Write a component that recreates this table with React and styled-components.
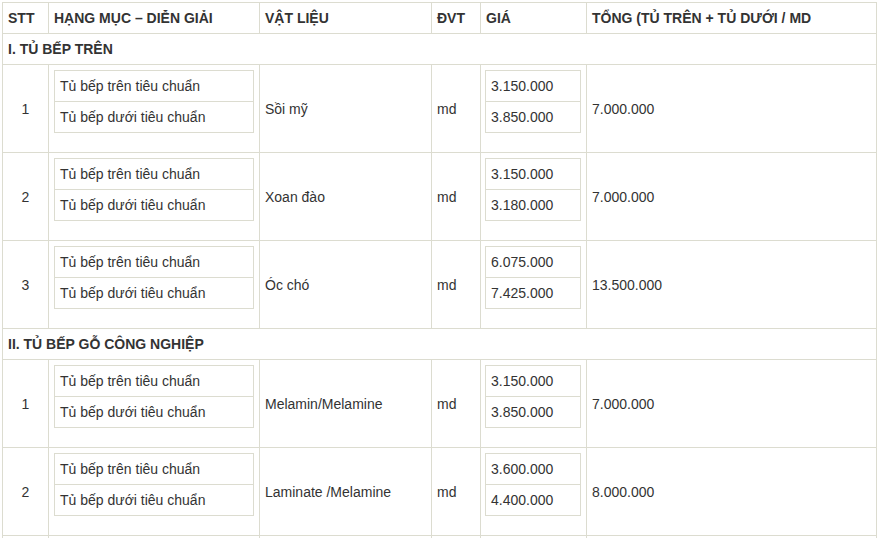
import styled, { createGlobalStyle } from "styled-components";

const GlobalStyle = createGlobalStyle`
  html, body {
    margin: 0;
    padding: 0;
    overflow: hidden;
    background: #ffffff;
  }
  body {
    font-family: "Liberation Sans", Arial, sans-serif;
    font-size: 14px;
    color: #333333;
  }
`;

const sections = [
  {
    title: "I. TỦ BẾP TRÊN",
    rows: [
      { no: 1, material: "Sồi mỹ", prices: ["3.150.000", "3.850.000"], total: "7.000.000" },
      { no: 2, material: "Xoan đào", prices: ["3.150.000", "3.180.000"], total: "7.000.000" },
      { no: 3, material: "Óc chó", prices: ["6.075.000", "7.425.000"], total: "13.500.000" },
    ],
  },
  {
    title: "II. TỦ BẾP GỖ CÔNG NGHIỆP",
    rows: [
      { no: 1, material: "Melamin/Melamine", prices: ["3.150.000", "3.850.000"], total: "7.000.000" },
      { no: 2, material: "Laminate /Melamine", prices: ["3.600.000", "4.400.000"], total: "8.000.000" },
      { no: 3, material: "Acrylic/Melamine", prices: ["4.500.000", "5.000.000"], total: "9.500.000" },
    ],
  },
];

const headers = ["STT", "HẠNG MỤC – DIỄN GIẢI", "VẬT LIỆU", "ĐVT", "GIÁ", "TỔNG (TỦ TRÊN + TỦ DƯỚI / MD"];

const App = () => {
  return (
    <>
      <GlobalStyle />
      <Page>
        <PriceTable>
          {headers.map((h) => (
            <HeadCell key={h}>{h}</HeadCell>
          ))}
          {sections.map((section) => (
            <Section key={section.title} section={section} />
          ))}
        </PriceTable>
      </Page>
    </>
  );
};

const Section = ({ section }) => {
  return (
    <>
      <SectionCell>{section.title}</SectionCell>
      {section.rows.map((row) => (
        <Row key={row.no} row={row} />
      ))}
    </>
  );
};

const Row = ({ row }) => {
  return (
    <>
      <Cell $center>{row.no}</Cell>
      <BoxCell>
        <InnerBox>
          <InnerItem>Tủ bếp trên tiêu chuẩn</InnerItem>
          <InnerItem>Tủ bếp dưới tiêu chuẩn</InnerItem>
        </InnerBox>
      </BoxCell>
      <Cell>{row.material}</Cell>
      <Cell>md</Cell>
      <BoxCell $left={4}>
        <InnerBox>
          {row.prices.map((p, i) => (
            <InnerItem key={i}>{p}</InnerItem>
          ))}
        </InnerBox>
      </BoxCell>
      <Cell>{row.total}</Cell>
    </>
  );
};

const Page = styled.div`
  padding: 2px 0 0 2px;
`;

const PriceTable = styled.div`
  display: grid;
  grid-template-columns: 45px 210px 171px 48px 105px 289px;
  gap: 1px;
  width: max-content;
  background-color: #dcdcd0;
  border: 1px solid #dcdcd0;
`;

const HeadCell = styled.div`
  background: #ffffff;
  padding: 5px;
  line-height: 20px;
  font-weight: bold;
  color: #333333;
  white-space: nowrap;
`;

const SectionCell = styled(HeadCell)`
  grid-column: 1 / -1;
`;

const Cell = styled.div`
  background: #ffffff;
  padding: 5px;
  line-height: 20px;
  display: flex;
  align-items: center;
  justify-content: ${(p) => (p.$center ? "center" : "flex-start")};
`;

const BoxCell = styled.div`
  background: #ffffff;
  padding: 5px 5px 5px ${(p) => (p.$left ? p.$left : 5)}px;
`;

const InnerBox = styled.div`
  display: flex;
  flex-direction: column;
  border: 1px solid #dcdcd0;
  margin-bottom: 14px;
`;

const InnerItem = styled.div`
  padding: 5px;
  line-height: 20px;
  white-space: nowrap;

  & + & {
    border-top: 1px solid #dcdcd0;
  }
`;

export default App;
